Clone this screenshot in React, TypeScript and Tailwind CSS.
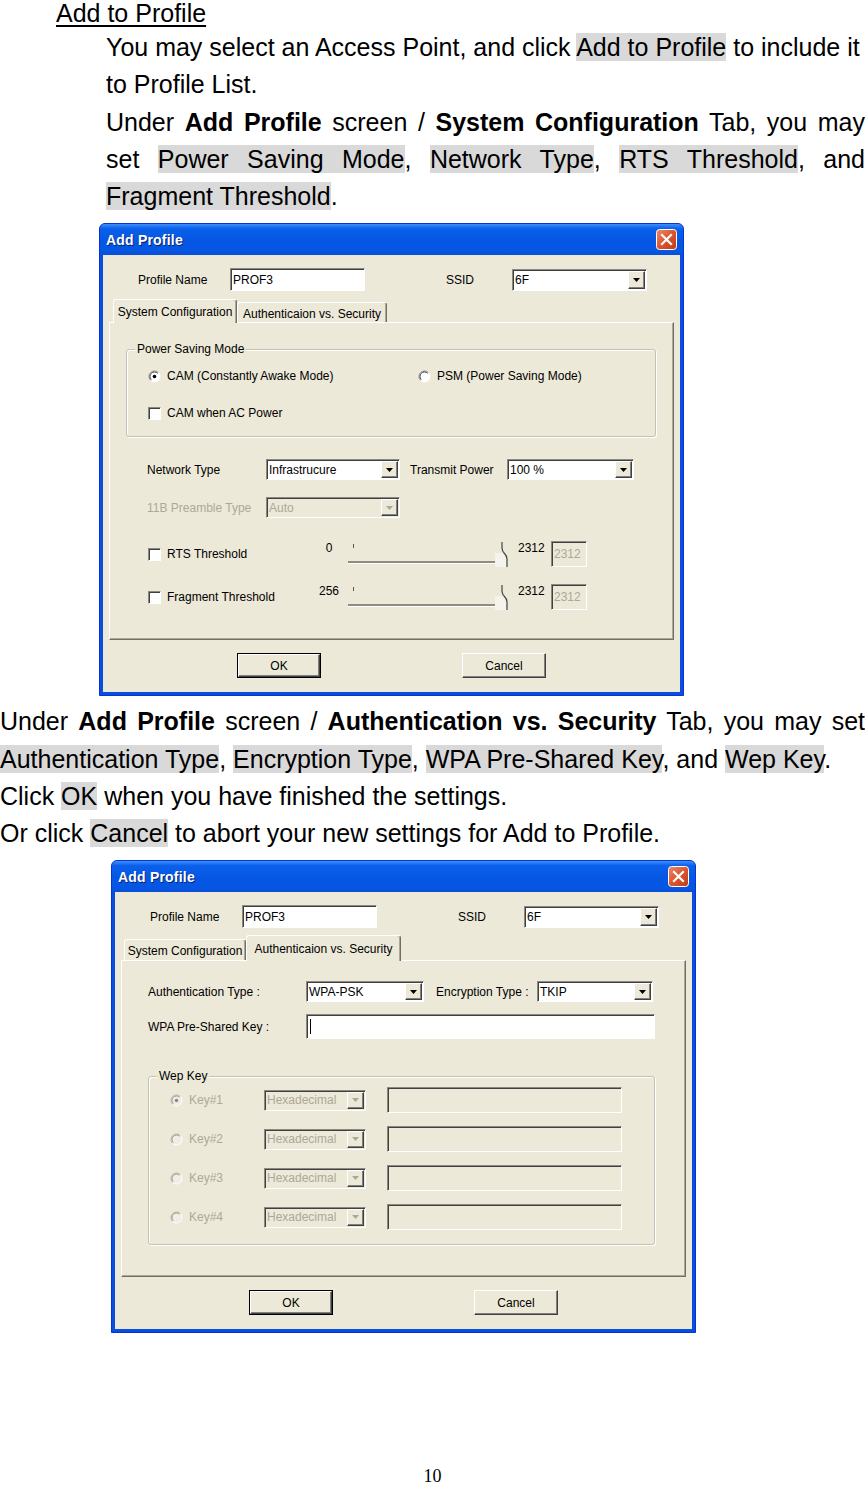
import React from "react";

const HL = "bg-[#d9d9d9]";
const SUNKEN =
  "border border-t-[#8c8a80] border-l-[#8c8a80] border-r-white border-b-white shadow-[inset_1px_1px_0_#404040]";
const RAISED =
  "border border-t-white border-l-white border-r-[#404040] border-b-[#404040] shadow-[inset_-1px_-1px_0_#808080]";
const GROUP =
  "border border-[#c5c2b2] rounded-[3px] shadow-[inset_1px_1px_0_#fff,1px_1px_0_#fff]";
const TAB =
  "flex items-center justify-center bg-[#ece9d8] border-t border-l border-r border-t-white border-l-white border-r-[#716f64] rounded-t-[3px] shadow-[inset_-1px_0_0_#aca899]";

function Arrow({ disabled }: { disabled?: boolean }) {
  return (
    <div className={`w-[17px] my-[1px] mr-[1px] flex items-center justify-center bg-[#ece9d8] ${RAISED}`}>
      <svg width="7" height="4" viewBox="0 0 7 4">
        <path d="M0 0H7L3.5 4Z" fill={disabled ? "#aca899" : "#000"} />
      </svg>
    </div>
  );
}

function Select({ cls, value, disabled }: { cls: string; value: string; disabled?: boolean }) {
  return (
    <div
      className={`${cls} ${SUNKEN} flex items-stretch shrink-0 ${
        disabled ? "bg-[#ece9d8] text-[#aca899]" : "bg-white text-black"
      }`}
    >
      <div className="flex-1 pl-[2px] flex items-center overflow-hidden whitespace-nowrap">{value}</div>
      <Arrow disabled={disabled} />
    </div>
  );
}

function Radio({ checked, disabled }: { checked?: boolean; disabled?: boolean }) {
  return (
    <svg width="13" height="13" viewBox="0 0 13 13" className="shrink-0">
      <circle cx="6.5" cy="6.5" r="5.5" fill={disabled ? "#efede4" : "#fff"} />
      <path d="M2.6 10.4A5.5 5.5 0 0 1 10.4 2.6" fill="none" stroke={disabled ? "#b9b6aa" : "#8c8a80"} />
      <path d="M3.3 9.7A4.5 4.5 0 0 1 9.7 3.3" fill="none" stroke={disabled ? "#9a988e" : "#404040"} />
      <path d="M10.4 2.6A5.5 5.5 0 0 1 2.6 10.4" fill="none" stroke="#fff" />
      {checked && <circle cx="6.5" cy="6.5" r="1.8" fill={disabled ? "#8c8a80" : "#000"} />}
    </svg>
  );
}

function Check() {
  return <div className={`w-[13px] h-[13px] shrink-0 bg-white ${SUNKEN}`} />;
}

function Slider() {
  return (
    <svg width="170" height="28" viewBox="0 0 170 28" className="shrink-0 block">
      <rect x="5" y="4" width="1" height="4" fill="#555" />
      <rect x="0" y="21" width="150" height="2" fill="#8f8c7f" />
      <rect x="0" y="23" width="150" height="1" fill="#fff" />
      <path d="M147 13 H154 L158 18 V27 H147 Z" fill="#f4f3ee" />
      <path d="M154 2 V8 Q154 11 156.5 13.5 Q159 16 159 19 V27" fill="none" stroke="#444" strokeWidth="1.2" />
    </svg>
  );
}

function CloseBtn() {
  return (
    <svg width="21" height="21" viewBox="0 0 21 21" className="shrink-0">
      <defs>
        <linearGradient id="cg" x1="0" y1="0" x2="1" y2="1">
          <stop offset="0" stopColor="#ec8a68" />
          <stop offset="0.5" stopColor="#dc5530" />
          <stop offset="1" stopColor="#c13a18" />
        </linearGradient>
      </defs>
      <rect x="0.5" y="0.5" width="20" height="20" rx="3" fill="url(#cg)" stroke="#fff" />
      <path d="M6 6L15 15M15 6L6 15" stroke="#fff" strokeWidth="2.2" strokeLinecap="square" />
    </svg>
  );
}

function Frame({ children }: { children: React.ReactNode }) {
  return (
    <div className="w-[585px] h-[473px] flex flex-col border border-[#0831d9] bg-[#0a4fdc] rounded-t-[6px] overflow-hidden font-['Liberation_Sans',Arial,sans-serif] text-[12px] leading-[14px] text-black">
      <div className="h-[31px] shrink-0 flex items-center justify-between pl-[6px] pr-[6px] bg-[linear-gradient(to_bottom,#3d8ffa_0%,#0a60ea_15%,#0557e3_55%,#0557e3_85%,#0a4ed8_100%)]">
        <span className="text-white font-bold text-[14px] tracking-[0.2px] [text-shadow:1px_1px_0_#0a1e6e]">
          Add Profile
        </span>
        <CloseBtn />
      </div>
      <div className="flex-1 mx-[3px] mb-[3px] bg-[#ece9d8] flex flex-col">{children}</div>
    </div>
  );
}

function Header() {
  return (
    <div className="mt-[13px] h-[23px] flex items-center pl-[35px]">
      <div className="w-[92px]">Profile Name</div>
      <div className={`w-[135px] h-[23px] bg-white ${SUNKEN} pl-[2px] flex items-center`}>PROF3</div>
      <div className="ml-[81px] w-[66px]">SSID</div>
      <Select cls="w-[135px] h-[22px]" value="6F" />
    </div>
  );
}

function Buttons() {
  return (
    <div className="mt-[13px] h-[25px] flex pl-[134px]">
      <div className="w-[84px] h-[25px] border border-black">
        <div className={`w-full h-full ${RAISED} flex items-center justify-center`}>OK</div>
      </div>
      <div className={`ml-[141px] w-[84px] h-[25px] ${RAISED} flex items-center justify-center`}>Cancel</div>
    </div>
  );
}

function ThresholdRow({ label, value, top }: { label: string; value: string; top: string }) {
  return (
    <div className={`${top} h-[28px] flex items-start pl-[38px]`}>
      <div className="w-[166px] h-[28px] flex items-center gap-[6px]">
        <Check />
        {label}
      </div>
      <div className="w-[30px] mt-[1px] text-center">{value}</div>
      <div className="ml-[4px]">
        <Slider />
      </div>
      <div className="w-[33px] mt-[1px]">2312</div>
      <div className={`w-[36px] h-[26px] mt-[1px] ${SUNKEN} bg-[#ece9d8] text-[#aca899] pl-[2px] flex items-center`}>
        2312
      </div>
    </div>
  );
}

function Dialog1() {
  return (
    <Frame>
      <Header />
      <div className="mt-[8px] h-[23px] flex items-end pl-[10px]">
        <div className={`${TAB} w-[124px] h-[24px] -mb-px relative z-10`}>System Configuration</div>
        <div className={`${TAB} w-[150px] h-[20px] pt-[2px]`}>Authenticaion vs. Security</div>
      </div>
      <div className="ml-[6px] w-[565px] h-[318px] border border-t-white border-l-white border-r-[#716f64] border-b-[#716f64] shadow-[inset_-1px_-1px_0_#aca899] flex flex-col">
        <div className={`mt-[26px] ml-[16px] w-[530px] h-[88px] ${GROUP}`}>
          <div className="-mt-[8px] ml-[8px] px-[2px] w-fit bg-[#ece9d8]">Power Saving Mode</div>
          <div className="mt-[10px] ml-[21px] h-[20px] flex items-center">
            <div className="w-[270px] flex items-center gap-[6px]">
              <Radio checked />
              CAM (Constantly Awake Mode)
            </div>
            <div className="flex items-center gap-[6px]">
              <Radio />
              PSM (Power Saving Mode)
            </div>
          </div>
          <div className="mt-[17px] ml-[21px] h-[20px] flex items-center gap-[6px]">
            <Check />
            CAM when AC Power
          </div>
        </div>
        <div className="mt-[22px] h-[21px] flex items-center pl-[37px]">
          <div className="w-[119px]">Network Type</div>
          <Select cls="w-[134px] h-[21px]" value="Infrastrucure" />
          <div className="ml-[10px] w-[97px]">Transmit Power</div>
          <Select cls="w-[127px] h-[21px]" value="100 %" />
        </div>
        <div className="mt-[17px] h-[21px] flex items-center pl-[37px]">
          <div className="w-[119px] text-[#aca899]">11B Preamble Type</div>
          <Select cls="w-[134px] h-[21px]" value="Auto" disabled />
        </div>
        <ThresholdRow top="mt-[22px]" label="RTS Threshold" value="0" />
        <ThresholdRow top="mt-[15px]" label="Fragment Threshold" value="256" />
      </div>
      <Buttons />
    </Frame>
  );
}

function KeyRow({ n, top, checked }: { n: number; top: string; checked?: boolean }) {
  return (
    <div className={`${top} h-[26px] flex items-center ml-[21px]`}>
      <div className="w-[94px] flex items-center gap-[6px] text-[#aca899]">
        <Radio disabled checked={checked} />
        {`Key#${n}`}
      </div>
      <Select cls="w-[102px] h-[21px]" value="Hexadecimal" disabled />
      <div className={`ml-[21px] w-[235px] h-[26px] ${SUNKEN} bg-[#ece9d8]`} />
    </div>
  );
}

function Dialog2() {
  return (
    <Frame>
      <Header />
      <div className="mt-[7px] h-[25px] flex items-end pl-[9px]">
        <div className={`${TAB} w-[122px] h-[21px] pt-[2px]`}>System Configuration</div>
        <div className={`${TAB} w-[155px] h-[26px] -mb-px relative z-10`}>Authenticaion vs. Security</div>
      </div>
      <div className="ml-[6px] w-[565px] h-[317px] border border-t-white border-l-white border-r-[#716f64] border-b-[#716f64] shadow-[inset_-1px_-1px_0_#aca899] flex flex-col">
        <div className="mt-[20px] h-[21px] flex items-center pl-[26px]">
          <div className="w-[158px]">Authentication Type :</div>
          <Select cls="w-[118px] h-[21px]" value="WPA-PSK" />
          <div className="ml-[12px] w-[101px]">Encryption Type :</div>
          <Select cls="w-[116px] h-[21px]" value="TKIP" />
        </div>
        <div className="mt-[12px] h-[25px] flex items-center pl-[26px]">
          <div className="w-[158px]">WPA Pre-Shared Key :</div>
          <div className={`w-[349px] h-[25px] bg-white ${SUNKEN} flex items-center pl-[3px]`}>
            <span className="w-px h-[15px] bg-black" />
          </div>
        </div>
        <div className={`mt-[37px] ml-[26px] w-[507px] h-[169px] ${GROUP}`}>
          <div className="-mt-[8px] ml-[8px] px-[2px] w-fit bg-[#ece9d8]">Wep Key</div>
          <KeyRow n={1} top="mt-[4px]" checked />
          <KeyRow n={2} top="mt-[13px]" />
          <KeyRow n={3} top="mt-[13px]" />
          <KeyRow n={4} top="mt-[13px]" />
        </div>
      </div>
      <Buttons />
    </Frame>
  );
}

const J = "text-justify [text-align-last:justify]";

export default function App() {
  return (
    <div className="w-[865px] h-[1486px] bg-white text-black font-['Liberation_Sans',Arial,sans-serif] text-[25px] overflow-hidden">
      <div className="pl-[56px] leading-[26px]">
        <span className="underline decoration-2 underline-offset-[3px]">Add to Profile</span>
      </div>
      <div className="ml-[106px] w-[759px] mt-[3px] leading-[37.25px]">
        <div className="whitespace-nowrap">
          You may select an Access Point, and click <span className={HL}>Add to Profile</span> to include it
        </div>
        <div>to Profile List.</div>
        <div className={J}>
          Under <b>Add Profile</b> screen / <b>System Configuration</b> Tab, you may
        </div>
        <div className={J}>
          set <span className={HL}>Power Saving Mode</span>, <span className={HL}>Network Type</span>,{" "}
          <span className={HL}>RTS Threshold</span>, and
        </div>
        <div>
          <span className={HL}>Fragment Threshold</span>.
        </div>
      </div>
      <div className="ml-[99px] mt-[8px] w-fit">
        <Dialog1 />
      </div>
      <div className="w-[865px] mt-[7px] leading-[37.25px]">
        <div className={J}>
          Under <b>Add Profile</b> screen / <b>Authentication vs. Security</b> Tab, you may set
        </div>
        <div className="whitespace-nowrap">
          <span className={HL}>Authentication Type</span>, <span className={HL}>Encryption Type</span>,{" "}
          <span className={HL}>WPA Pre-Shared Key</span>, and <span className={HL}>Wep Key</span>.
        </div>
        <div>
          Click <span className={HL}>OK</span> when you have finished the settings.
        </div>
        <div>
          Or click <span className={HL}>Cancel</span> to abort your new settings for Add to Profile.
        </div>
      </div>
      <div className="ml-[111px] mt-[8px] w-fit">
        <Dialog2 />
      </div>
      <div className="mt-[134px] leading-[18px] text-center text-[18px] font-['Liberation_Serif','Times_New_Roman',serif]">
        10
      </div>
    </div>
  );
}
